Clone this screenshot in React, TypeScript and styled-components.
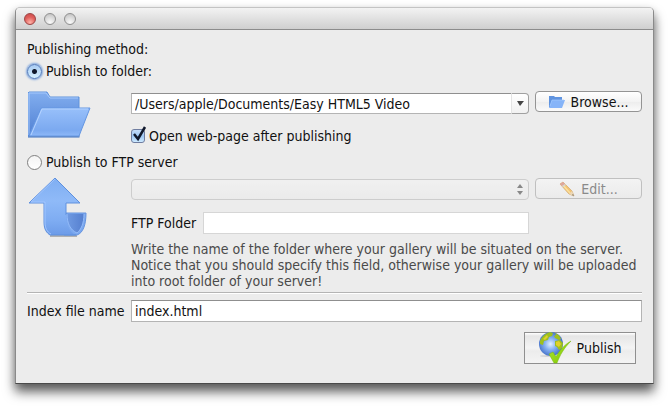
import React, { useState } from "react";
import styled, { createGlobalStyle, css } from "styled-components";

const Global = createGlobalStyle`
  * { box-sizing: border-box; }
  body {
    margin: 0;
    background: #fff;
    color: #111;
    font: 14px/16px "DejaVu Sans Condensed", "DejaVu Sans", sans-serif;
  }
  button, input, select { font: inherit; color: inherit; margin: 0; }
`;

const Page = styled.div`
  padding: 7px 15px 22px;
`;

const Window = styled.main`
  border: 1px solid #8a8a8a;
  border-top-color: #c4c4c4;
  border-bottom-color: #4a4a4a;
  border-radius: 5px 5px 0 0;
  background: #ececec;
  box-shadow: 0 8px 12px rgba(0, 0, 0, 0.6), 0 3px 8px rgba(0, 0, 0, 0.15);
`;

const TitleBar = styled.header`
  display: flex;
  align-items: center;
  gap: 8px;
  height: 22px;
  padding-left: 8px;
  border-bottom: 1px solid #8c8c8c;
  border-radius: 4px 4px 0 0;
  background: linear-gradient(#f3f3f3, #cfcfcf);
`;

const Light = styled.button<{ $red?: boolean }>`
  width: 12px;
  height: 12px;
  padding: 0;
  border: 1px solid ${(p) => (p.$red ? "#9c4444" : "#8f8f8f")};
  border-radius: 50%;
  background: ${(p) =>
    p.$red
      ? "radial-gradient(circle at 50% 85%, #ffb3a8, #e0605c 55%, #c94848)"
      : "radial-gradient(circle at 50% 85%, #fafafa, #d6d6d6 60%, #bdbdbd)"};
`;

const Form = styled.form`
  padding: 11px 11px 19px;
`;

const Heading = styled.div`
  padding-bottom: 4px;
`;

const Choice = styled.label`
  display: flex;
  align-items: center;
  gap: 4px;
  height: 20px;
`;

const Radio = styled.input`
  appearance: none;
  width: 15px;
  height: 15px;
  border: 1px solid #808080;
  border-radius: 50%;
  background: linear-gradient(#f4f4f4, #fff);
  outline: none;
  &:checked {
    border-color: #4f78bb;
    background: radial-gradient(circle, #10182c 2px, transparent 3px),
      linear-gradient(#a9cbf2, #d6f0ff);
    box-shadow: 0 0 2px 1px #7ba3dc;
  }
`;

const Section = styled.section<{ $gap: number }>`
  display: grid;
  grid-template-columns: 104px 1fr;
  padding-top: ${(p) => p.$gap}px;
`;

const Emblem = styled.div`
  padding-left: 1px;
`;

const Fields = styled.div`
  min-width: 0;
`;

const Row = styled.div`
  display: grid;
  grid-template-columns: 1fr 107px;
  gap: 6px;
`;

const fieldBox = css`
  height: 22px;
  padding: 0 3px;
  border: 1px solid #b4b4b4;
  border-top-color: #8f8f8f;
  border-radius: 0;
  background: #fff;
  outline: none;
  min-width: 0;
  width: 100%;
`;

const Text = styled.input`
  ${fieldBox}
  &:disabled { border-color: #d6d6d6; }
`;

const Combo = styled.div`
  display: grid;
  grid-template-columns: 1fr 18px;
  margin-top: 2px;
`;

const ComboText = styled.input`
  ${fieldBox}
  height: 21px;
  border-right: 0;
`;

const ComboButton = styled.button`
  display: grid;
  place-items: center;
  height: 21px;
  padding: 0;
  border: 1px solid #a0a0a0;
  border-left-color: #e4e4e4;
  border-radius: 0 4px 4px 0;
  background: linear-gradient(#fff, #f1f1f1);
`;

const SelectWrap = styled.div`
  position: relative;
  margin-top: 1px;
  svg {
    position: absolute;
    right: 6px;
    top: 5px;
    pointer-events: none;
  }
`;

const Select = styled.select`
  display: block;
  appearance: none;
  width: 100%;
  height: 21px;
  border: 1px solid #c0c0c0;
  border-radius: 4px;
  background: linear-gradient(#f3f3f3, #ebebeb);
`;

const Button = styled.button`
  display: flex;
  align-items: center;
  justify-content: center;
  gap: 6px;
  height: 21px;
  padding: 0;
  border: 1px solid #949494;
  border-radius: 4px;
  background: linear-gradient(#fff, #f3f3f3 50%, #ececec 51%, #fafafa);
  &:disabled {
    border-color: #c0c0c0;
    background: linear-gradient(#f3f3f3, #ebebeb);
    color: #8a8a8a;
  }
`;

const CheckLabel = styled.label`
  display: flex;
  align-items: center;
  gap: 4px;
  height: 16px;
  margin: 14px 0 8px;
`;

const CheckBox = styled.span`
  position: relative;
  width: 14px;
  height: 14px;
  svg {
    position: absolute;
    left: 0;
    top: -3px;
    pointer-events: none;
  }
  input:not(:checked) + svg { display: none; }
`;

const Check = styled.input`
  display: block;
  appearance: none;
  width: 14px;
  height: 14px;
  border: 1px solid #6f7da0;
  border-radius: 3px;
  background: #fff;
  &:checked { background: linear-gradient(#c5dcf8, #9cc6f4 50%, #cdeaff); }
`;

const FtpRow = styled.div`
  display: grid;
  grid-template-columns: 72px 1fr 107px;
  align-items: center;
  margin-top: 12px;
  input { width: calc(100% - 6px); }
`;

const Note = styled.p`
  margin: 7px 0 3px;
  color: #4a4a4a;
`;

const Rule = styled.hr`
  height: 2px;
  margin: 0 0 6px;
  border: 0;
  border-top: 1px solid #b4b4b4;
  background: #fff;
`;

const IndexRow = styled.div`
  display: grid;
  grid-template-columns: 104px 1fr;
  align-items: center;
`;

const Actions = styled.footer`
  display: flex;
  justify-content: flex-end;
  padding: 10px 6px 0 0;
`;

const Publish = styled(Button)`
  width: 112px;
  height: 32px;
  border-radius: 0;
  border-color: #8f8f8f;
  background: linear-gradient(#fff, #e6e6e6 10%, #f4f4f4 50%, #ececec 60%, #f4f4f4);
`;

function Folder() {
  return (
    <svg width="64" height="48" viewBox="0 0 64 48" aria-hidden="true">
      <defs>
        <linearGradient id="folderBack" x2="0" y2="1">
          <stop stopColor="#82aeef" />
          <stop offset="1" stopColor="#4f7fd2" />
        </linearGradient>
        <linearGradient id="folderFront" x2="0" y2="1">
          <stop stopColor="#98c0fa" />
          <stop offset=".8" stopColor="#7ba9f0" />
          <stop offset="1" stopColor="#8db8f8" />
        </linearGradient>
      </defs>
      <path d="M0 46V2l1-1h18l3 5h29v40z" fill="url(#folderBack)" stroke="#5f92dc" />
      <path d="M1 44V2h17l4 5h28" fill="none" stroke="#a6c8fb" />
      <path d="M13 17h49L51 45H1z" fill="url(#folderFront)" stroke="#6496e2" />
      <path d="M3 44l11-26h46" fill="none" stroke="#b3d2ff" />
      <path d="M0 46h52" stroke="#6f88b5" opacity=".6" />
    </svg>
  );
}

function SmallFolder() {
  return (
    <svg width="16" height="12" viewBox="0 0 16 12" aria-hidden="true">
      <path d="M0 0h5l1 1h7v10H0z" fill="#5f93df" />
      <path d="M3 4h13l-3 8H0z" fill="#86b4f8" />
      <path d="M1 10l2-6h12" fill="none" stroke="#a4caff" strokeWidth=".7" />
    </svg>
  );
}

function UpArrow() {
  return (
    <svg width="60" height="62" viewBox="0 1 60 62" aria-hidden="true">
      <defs>
        <linearGradient id="arrowFace" x2="0" y2="1">
          <stop stopColor="#7faef2" />
          <stop offset=".4" stopColor="#8fbaf8" />
          <stop offset=".75" stopColor="#7eacf2" />
          <stop offset="1" stopColor="#6c9be8" />
        </linearGradient>
        <linearGradient id="arrowCurl" x2="1" y2="0">
          <stop stopColor="#6f9ae2" />
          <stop offset="1" stopColor="#557fcf" />
        </linearGradient>
      </defs>
      <path d="M22 59h27" stroke="#777" strokeWidth="2" opacity=".5" />
      <path d="M38 36h20c0 12-3 20-9 22H36z" fill="#7ba8ef" stroke="#6694df" />
      <path d="M27 1L1 26h15v19c0 8 3 11 6 13h26c-7-3-10-11-10-20V26h14z" fill="url(#arrowFace)" />
      <path d="M48 58H22c-3-2-6-5-6-13V26H1L27 1l25 25H38v12" fill="none" stroke="#5e90de" />
      <path d="M39 37h17c0 9-3 16-7 19-7-3-10-10-10-19z" fill="url(#arrowCurl)" />
      <path d="M56 37c0 9-3 16-7 19-7-3-10-10-10-19" fill="none" stroke="#93bcfa" />
      <path d="M27 2L3 25h14v20c0 6 2 10 6 12" fill="none" stroke="#a0c5ff" />
    </svg>
  );
}

function Pencil() {
  return (
    <svg width="16" height="16" viewBox="0 0 16 16" aria-hidden="true" opacity=".75">
      <path d="M1 3l3-2 9 9 2 5-5-2z" fill="#f5b548" stroke="#c99248" strokeWidth=".7" />
      <path d="M3 3l8 9" stroke="#ffdc83" strokeWidth="1.5" />
      <path d="M1 3l3-2 2 2-3 2z" fill="#d98d83" />
      <path d="M3 5l3-2 1 1-3 2z" fill="#ccc" />
      <path d="M10 13l3-3 2 5z" fill="#edd2a5" />
      <path d="M13 14l1-1 1 2z" fill="#444" />
    </svg>
  );
}

function Globe() {
  return (
    <svg width="32" height="32" viewBox="0 0 32 32" aria-hidden="true">
      <defs>
        <radialGradient id="sea" cx=".48" cy=".5" r=".55">
          <stop stopColor="#e2f1ff" />
          <stop offset=".45" stopColor="#85b0f2" />
          <stop offset="1" stopColor="#3c69c4" />
        </radialGradient>
        <linearGradient id="tick" x2="1" y2="1">
          <stop stopColor="#b4e830" />
          <stop offset="1" stopColor="#78c400" />
        </linearGradient>
      </defs>
      <ellipse cx="10" cy="24" rx="9" ry="1" fill="#999" opacity=".3" />
      <circle cx="12" cy="12" r="12" fill="url(#sea)" />
      <path d="M1 9C3 4 7 1 11 0l3 1-1 3-3 1-1 3-4 1-1 4-3-1zM16 1c3 1 5 3 6 6l-2 1-4-2-1-2 2-1zM16 9l5-1 3 3-1 5-3 2-2-3-2-1z" fill="#9fc01d" />
      <path d="M4 7l4-4 1 2-3 3zM17 10l3-1 2 3-2 3-3-2z" fill="#e1d02c" />
      <path d="M10 22l4-2 3 5C20 19 25 13 32 9 25 16 21 23 18 31h-3z" fill="url(#tick)" stroke="#76b80c" strokeWidth=".5" />
    </svg>
  );
}

export default function App() {
  const [method, setMethod] = useState<"folder" | "ftp">("folder");
  const ftpOff = method !== "ftp";
  return (
    <>
      <Global />
      <Page>
        <Window>
          <TitleBar>
            <Light $red aria-label="Close" />
            <Light aria-label="Minimize" />
            <Light aria-label="Zoom" />
          </TitleBar>
          <Form onSubmit={(e) => e.preventDefault()}>
            <Heading>Publishing method:</Heading>
            <Choice>
              <Radio type="radio" name="method" checked={ftpOff} onChange={() => setMethod("folder")} />
              Publish to folder:
            </Choice>
            <Section $gap={10}>
              <Emblem><Folder /></Emblem>
              <Fields>
                <Row>
                  <Combo>
                    <ComboText aria-label="Folder" defaultValue="/Users/apple/Documents/Easy HTML5 Video" />
                    <ComboButton type="button" aria-label="Recent folders">
                      <svg width="8" height="6" aria-hidden="true"><path d="M1 0h7L4 5z" fill="#444" /></svg>
                    </ComboButton>
                  </Combo>
                  <Button type="button"><SmallFolder />Browse...</Button>
                </Row>
                <CheckLabel>
                  <CheckBox>
                    <Check type="checkbox" defaultChecked />
                    <svg width="16" height="16" aria-hidden="true">
                      <path d="M3 8l4 5 7-12" fill="none" stroke="#10182c" strokeWidth="2.5" />
                    </svg>
                  </CheckBox>
                  Open web-page after publishing
                </CheckLabel>
              </Fields>
            </Section>
            <Choice>
              <Radio type="radio" name="method" checked={!ftpOff} onChange={() => setMethod("ftp")} />
              Publish to FTP server
            </Choice>
            <Section $gap={6}>
              <Emblem><UpArrow /></Emblem>
              <Fields>
                <Row>
                  <SelectWrap>
                    <Select aria-label="FTP server" disabled={ftpOff} />
                    <svg width="6" height="12" aria-hidden="true"><path d="M0 4l3-4 3 4zM0 7h6l-3 4z" fill="#888" /></svg>
                  </SelectWrap>
                  <Button type="button" disabled={ftpOff}><Pencil />Edit...</Button>
                </Row>
                <FtpRow>
                  <label htmlFor="ftp">FTP Folder</label>
                  <Text id="ftp" disabled={ftpOff} />
                </FtpRow>
                <Note>
                  Write the name of the folder where your gallery will be situated on the server. Notice that you
                  should specify this field, otherwise your gallery will be uploaded into root folder of your server!
                </Note>
              </Fields>
            </Section>
            <Rule />
            <IndexRow>
              <label htmlFor="index">Index file name</label>
              <Text id="index" defaultValue="index.html" />
            </IndexRow>
            <Actions>
              <Publish type="submit"><Globe />Publish</Publish>
            </Actions>
          </Form>
        </Window>
      </Page>
    </>
  );
}
